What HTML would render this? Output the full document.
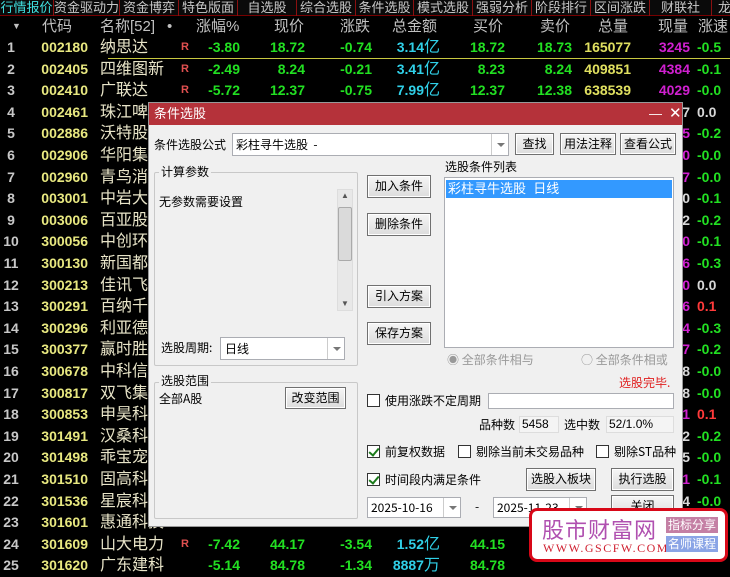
<!DOCTYPE html>
<html><head><meta charset="utf-8">
<style>
*{margin:0;padding:0;box-sizing:border-box}
body{width:730px;height:564px;overflow:hidden;background:#000;position:relative;font-family:"Liberation Sans","Noto Sans CJK SC",sans-serif}
.a{position:absolute;white-space:nowrap}
.tabs{position:absolute;left:0;top:0;width:730px;height:16px;background:#0a0a0a;border-bottom:1px solid #700}
.tab{position:absolute;top:0;height:16px;border-right:1px solid #8a1010;color:#c8c8c8;font-size:13px;line-height:16px;text-align:center;overflow:hidden}
.hd{position:absolute;top:16px;height:21px;width:730px;color:#c0c0c0;font-size:15px;line-height:21px}
.row{position:absolute;left:0;width:730px;height:21.6px;font-size:14px;line-height:21.6px;font-weight:bold}
.row span{position:absolute;top:0;white-space:nowrap}
.n{left:0;width:22px;text-align:center;color:#c8c8c8}
.cd{left:28px;width:60px;text-align:right;color:#e8e880}
.nm{left:100px;color:#e8e4c8;font-weight:normal;font-size:16px}
.r{left:181px;color:#e05050;font-size:11px}
.g{color:#22e022}.w{color:#d8d8d8}.rd{color:#ff3a3a}.cy{color:#30d0e8}.y{color:#e0e060}.m{color:#d020d0}
.c4{left:185px;width:55px;text-align:right}
.c5{left:245px;width:60px;text-align:right}
.c6{left:315px;width:57px;text-align:right}
.c7{left:375px;width:65px;text-align:right}
.c8{left:445px;width:60px;text-align:right}
.c9{left:510px;width:62px;text-align:right}
.c10{left:570px;width:61px;text-align:right}
.c11{left:635px;width:55px;text-align:right}
.c12{left:697px}
.yi{font-weight:normal;font-size:16px}
.dlg{position:absolute;left:148px;top:102px;width:535px;height:425px;background:#f0f0f0;border:1px solid #999}
.tt{position:absolute;left:0;top:0;width:100%;height:22px;background:#b5323a;color:#fff;font-size:13px;line-height:22px;padding-left:5px}
.t{position:absolute;font-size:12px;color:#000;white-space:nowrap;line-height:14px;font-family:"Noto Sans CJK SC","Liberation Sans",sans-serif}
.btn{position:absolute;background:linear-gradient(#f6f6f6,#dcdcdc);border:1px solid #707070;font-size:12px;text-align:center;color:#000;box-shadow:inset 0 0 0 1px #fff}
.box{position:absolute;background:#fff;border:1px solid #abadb3}
.grp{position:absolute;border:1px solid #c8c8c8;border-radius:2px}
.gl{position:absolute;background:#f0f0f0;font-size:12px;padding:0 2px;line-height:14px}
.dd{position:absolute;top:0;right:0;width:17px;height:100%;border-left:1px solid #ccc}
.dd:after{content:"";position:absolute;left:5px;top:50%;margin-top:-2px;border-left:4px solid transparent;border-right:4px solid transparent;border-top:4px solid #777}
.cb{position:absolute;width:13px;height:13px;border:1px solid #333;background:#fff}
.ck:after{content:"";position:absolute;left:3px;top:0px;width:4px;height:8px;border:solid #1a7a1a;border-width:0 2px 2px 0;transform:rotate(40deg)}
.sb{position:absolute;background:#e8e8e8;border:1px solid #ddd}
</style></head><body>
<div class="tabs">
<div class="tab" style="left:0;width:54px;color:#40e0e0">行情报价</div>
<div class="tab" style="left:54px;width:66px">资金驱动力</div>
<div class="tab" style="left:120px;width:59px">资金博弈</div>
<div class="tab" style="left:179px;width:59px">特色版面</div>
<div class="tab" style="left:238px;width:59px">自选股</div>
<div class="tab" style="left:297px;width:59px">综合选股</div>
<div class="tab" style="left:356px;width:58px">条件选股</div>
<div class="tab" style="left:414px;width:59px">模式选股</div>
<div class="tab" style="left:473px;width:59px">强弱分析</div>
<div class="tab" style="left:532px;width:59px">阶段排行</div>
<div class="tab" style="left:591px;width:59px">区间涨跌</div>
<div class="tab" style="left:650px;width:62px">财联社</div>
<div class="tab" style="left:712px;width:30px;text-align:left;padding-left:6px">龙</div>
</div>
<div class="hd">
<span class="a" style="left:12px;font-size:9px">▼</span>
<span class="a" style="left:42px">代码</span>
<span class="a" style="left:100px">名称[52]</span>
<span class="a" style="left:167px">•</span>
<span class="a" style="left:196px">涨幅%</span>
<span class="a" style="left:274px">现价</span>
<span class="a" style="left:340px">涨跌</span>
<span class="a" style="left:392px">总金额</span>
<span class="a" style="left:473px">买价</span>
<span class="a" style="left:540px">卖价</span>
<span class="a" style="left:598px">总量</span>
<span class="a" style="left:658px">现量</span>
<span class="a" style="left:698px">涨速</span>
</div>

<div class="row" style="top:37px"><span class="n">1</span><span class="cd">002180</span><span class="nm">纳思达</span><span class="r">R</span><span class="c4 g">-3.80</span><span class="c5 g">18.72</span><span class="c6 g">-0.74</span><span class="c7 cy">3.14<b class="yi">亿</b></span><span class="c8 g">18.72</span><span class="c9 g">18.73</span><span class="c10 y">165077</span><span class="c11 m">3245</span><span class="c12 g">-0.5</span></div>
<div class="a" style="left:108px;top:58px;width:622px;height:1px;background:#c8c840"></div>
<div class="row" style="top:58.6px"><span class="n">2</span><span class="cd">002405</span><span class="nm">四维图新</span><span class="r">R</span><span class="c4 g">-2.49</span><span class="c5 g">8.24</span><span class="c6 g">-0.21</span><span class="c7 cy">3.41<b class="yi">亿</b></span><span class="c8 g">8.23</span><span class="c9 g">8.24</span><span class="c10 y">409851</span><span class="c11 m">4384</span><span class="c12 g">-0.1</span></div>
<div class="row" style="top:80.2px"><span class="n">3</span><span class="cd">002410</span><span class="nm">广联达</span><span class="r">R</span><span class="c4 g">-5.72</span><span class="c5 g">12.37</span><span class="c6 g">-0.75</span><span class="c7 cy">7.99<b class="yi">亿</b></span><span class="c8 g">12.37</span><span class="c9 g">12.38</span><span class="c10 y">638539</span><span class="c11 m">4029</span><span class="c12 g">-0.0</span></div>
<div class="row" style="top:101.8px"><span class="n">4</span><span class="cd">002461</span><span class="nm">珠江啤酒</span><span class="c11 w">7</span><span class="c12 w">0.0</span></div>
<div class="row" style="top:123.4px"><span class="n">5</span><span class="cd">002886</span><span class="nm">沃特股份</span><span class="c11 m">5</span><span class="c12 g">-0.2</span></div>
<div class="row" style="top:145px"><span class="n">6</span><span class="cd">002906</span><span class="nm">华阳集团</span><span class="c11 m">0</span><span class="c12 g">-0.0</span></div>
<div class="row" style="top:166.6px"><span class="n">7</span><span class="cd">002960</span><span class="nm">青鸟消防</span><span class="c11 m">7</span><span class="c12 g">-0.0</span></div>
<div class="row" style="top:188.2px"><span class="n">8</span><span class="cd">003001</span><span class="nm">中岩大地</span><span class="c11 w">0</span><span class="c12 g">-0.1</span></div>
<div class="row" style="top:209.8px"><span class="n">9</span><span class="cd">003006</span><span class="nm">百亚股份</span><span class="c11 w">2</span><span class="c12 g">-0.2</span></div>
<div class="row" style="top:231.4px"><span class="n">10</span><span class="cd">300056</span><span class="nm">中创环保</span><span class="c11 m">0</span><span class="c12 g">-0.1</span></div>
<div class="row" style="top:253px"><span class="n">11</span><span class="cd">300130</span><span class="nm">新国都</span><span class="c11 m">6</span><span class="c12 g">-0.3</span></div>
<div class="row" style="top:274.6px"><span class="n">12</span><span class="cd">300213</span><span class="nm">佳讯飞鸿</span><span class="c11 m">0</span><span class="c12 w">0.0</span></div>
<div class="row" style="top:296.2px"><span class="n">13</span><span class="cd">300291</span><span class="nm">百纳千成</span><span class="c11 m">6</span><span class="c12 rd">0.1</span></div>
<div class="row" style="top:317.8px"><span class="n">14</span><span class="cd">300296</span><span class="nm">利亚德</span><span class="c11 m">4</span><span class="c12 g">-0.3</span></div>
<div class="row" style="top:339.4px"><span class="n">15</span><span class="cd">300377</span><span class="nm">赢时胜</span><span class="c11 m">7</span><span class="c12 g">-0.2</span></div>
<div class="row" style="top:361px"><span class="n">16</span><span class="cd">300678</span><span class="nm">中科信息</span><span class="c11 w">8</span><span class="c12 g">-0.0</span></div>
<div class="row" style="top:382.6px"><span class="n">17</span><span class="cd">300817</span><span class="nm">双飞集团</span><span class="c11 w">8</span><span class="c12 g">-0.0</span></div>
<div class="row" style="top:404.2px"><span class="n">18</span><span class="cd">300853</span><span class="nm">申昊科技</span><span class="c11 m">1</span><span class="c12 rd">0.1</span></div>
<div class="row" style="top:425.8px"><span class="n">19</span><span class="cd">301491</span><span class="nm">汉桑科技</span><span class="c11 w">2</span><span class="c12 g">-0.2</span></div>
<div class="row" style="top:447.4px"><span class="n">20</span><span class="cd">301498</span><span class="nm">乖宝宠物</span><span class="c11 w">5</span><span class="c12 g">-0.0</span></div>
<div class="row" style="top:469px"><span class="n">21</span><span class="cd">301510</span><span class="nm">固高科技</span><span class="c11 m">1</span><span class="c12 g">-0.1</span></div>
<div class="row" style="top:490.6px"><span class="n">22</span><span class="cd">301536</span><span class="nm">星宸科技</span><span class="c11 w">4</span><span class="c12 g">-0.0</span></div>
<div class="row" style="top:512.2px"><span class="n">23</span><span class="cd">301601</span><span class="nm">惠通科技</span><span class="c11 w">4</span><span class="c12 g">-0.0</span></div>
<div class="row" style="top:533.8px"><span class="n">24</span><span class="cd">301609</span><span class="nm">山大电力</span><span class="r">R</span><span class="c4 g">-7.42</span><span class="c5 g">44.17</span><span class="c6 g">-3.54</span><span class="c7 cy">1.52<b class="yi">亿</b></span><span class="c8 g">44.15</span></div>
<div class="row" style="top:555.4px"><span class="n">25</span><span class="cd">301620</span><span class="nm">广东建科</span><span class="c4 g">-5.14</span><span class="c5 g">84.78</span><span class="c6 g">-1.34</span><span class="c7 cy">8887<b class="yi">万</b></span><span class="c8 g">84.78</span></div>

<div class="dlg">
<div class="tt">条件选股<span class="a" style="left:500px;top:0;font-size:13px">—</span><span class="a" style="left:520px;top:0;font-size:15px">✕</span></div>
<div class="t" style="left:5px;top:35px">条件选股公式</div>
<div class="box" style="left:83px;top:30px;width:277px;height:23px"><span class="t" style="left:3px;top:4px">彩柱寻牛选股 &nbsp;-</span><div class="dd"></div></div>
<div class="btn" style="left:366px;top:30px;width:39px;height:22px;line-height:20px">查找</div>
<div class="btn" style="left:411px;top:30px;width:56px;height:22px;line-height:20px">用法注释</div>
<div class="btn" style="left:471px;top:30px;width:56px;height:22px;line-height:20px">查看公式</div>

<div class="grp" style="left:5px;top:69px;width:204px;height:194px"></div>
<div class="gl" style="left:10px;top:62px">计算参数</div>
<div class="t" style="left:10px;top:92px">无参数需要设置</div>
<div class="sb" style="left:188px;top:86px;width:16px;height:122px"></div>
<div class="a" style="left:192px;top:88px;font-size:8px;color:#555">▲</div>
<div class="a" style="left:192px;top:196px;font-size:8px;color:#555">▼</div>
<div class="a" style="left:189px;top:104px;width:14px;height:54px;background:#dadada;border:1px solid #aaa;border-radius:2px"></div>
<div class="t" style="left:12px;top:238px">选股周期:</div>
<div class="box" style="left:71px;top:234px;width:125px;height:23px"><span class="t" style="left:4px;top:4px">日线</span><div class="dd"></div></div>

<div class="btn" style="left:218px;top:72px;width:64px;height:23px;line-height:21px">加入条件</div>
<div class="btn" style="left:218px;top:110px;width:64px;height:23px;line-height:21px">删除条件</div>
<div class="btn" style="left:218px;top:182px;width:64px;height:23px;line-height:21px">引入方案</div>
<div class="btn" style="left:218px;top:219px;width:64px;height:23px;line-height:21px">保存方案</div>

<div class="t" style="left:296px;top:57px">选股条件列表</div>
<div class="box" style="left:295px;top:74px;width:230px;height:171px"><div class="a" style="left:1px;top:2px;width:226px;height:18px;background:#3399ff;color:#fff;font-size:13px;line-height:18px;padding-left:2px">彩柱寻牛选股 &nbsp;日线</div></div>
<div class="t" style="left:298px;top:250px;color:#999">◉ 全部条件相与</div>
<div class="t" style="left:432px;top:250px;color:#999">○ 全部条件相或</div>
<div class="t" style="left:470px;top:273px;color:#e02020">选股完毕.</div>

<div class="grp" style="left:5px;top:279px;width:204px;height:137px"></div>
<div class="gl" style="left:10px;top:271px">选股范围</div>
<div class="t" style="left:10px;top:289px">全部A股</div>
<div class="btn" style="left:136px;top:284px;width:61px;height:22px;line-height:20px">改变范围</div>

<div class="cb" style="left:218px;top:291px"></div><div class="t" style="left:236px;top:291px">使用涨跌不定周期</div>
<div class="box" style="left:339px;top:290px;width:186px;height:16px"></div>
<div class="t" style="left:330px;top:315px">品种数</div>
<div class="a" style="left:370px;top:313px;width:40px;height:17px;background:#f4f4f4;border:1px solid #ddd;font-size:12px;line-height:15px;padding-left:2px">5458</div>
<div class="t" style="left:415px;top:315px">选中数</div>
<div class="a" style="left:457px;top:313px;width:68px;height:17px;background:#f4f4f4;border:1px solid #ddd;font-size:12px;line-height:15px;padding-left:2px">52/1.0%</div>

<div class="cb ck" style="left:218px;top:342px"></div><div class="t" style="left:236px;top:342px">前复权数据</div>
<div class="cb" style="left:309px;top:342px"></div><div class="t" style="left:327px;top:342px">剔除当前未交易品种</div>
<div class="cb" style="left:447px;top:342px"></div><div class="t" style="left:465px;top:342px">剔除ST品种</div>

<div class="cb ck" style="left:218px;top:370px"></div><div class="t" style="left:236px;top:370px">时间段内满足条件</div>
<div class="btn" style="left:377px;top:365px;width:70px;height:23px;line-height:21px">选股入板块</div>
<div class="btn" style="left:462px;top:365px;width:63px;height:23px;line-height:21px">执行选股</div>
<div class="box" style="left:218px;top:394px;width:94px;height:21px"><span class="t" style="left:3px;top:3px">2025-10-16</span><div class="dd"></div></div>
<div class="t" style="left:326px;top:397px">-</div>
<div class="box" style="left:344px;top:394px;width:94px;height:21px"><span class="t" style="left:3px;top:3px">2025-11-23</span><div class="dd"></div></div>
<div class="btn" style="left:462px;top:392px;width:63px;height:22px;line-height:20px">关闭</div>
</div>

<div class="a" style="left:529px;top:508px;width:199px;height:54px;background:#fff;border:3px solid #d80818;border-radius:8px">
<div class="a" style="left:10px;top:2px;font-size:22px;color:#b050b0;letter-spacing:1px">股市财富网</div>
<div class="a" style="left:11px;top:30px;font-size:12px;color:#d02030;font-family:'Liberation Serif',serif;letter-spacing:1.5px">WWW.GSCFW.COM</div>
<div class="a" style="left:134px;top:6px;width:52px;height:16px;background:#c47fa4;color:#fff;font-size:12px;line-height:16px;text-align:center">指标分享</div>
<div class="a" style="left:134px;top:25px;width:52px;height:16px;background:#8aa4e6;color:#fff;font-size:12px;line-height:16px;text-align:center">名师课程</div>
</div>
</body></html>
